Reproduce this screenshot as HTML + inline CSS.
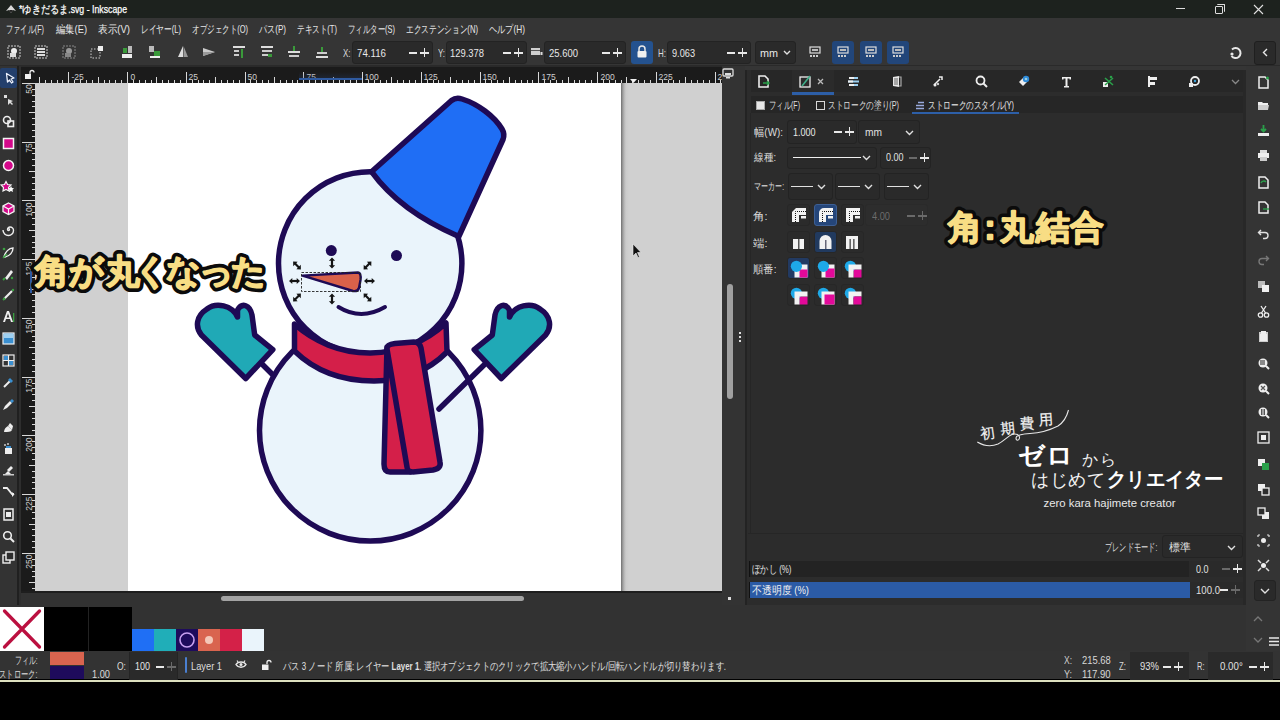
<!DOCTYPE html>
<html><head><meta charset="utf-8">
<style>
*{box-sizing:border-box;margin:0;padding:0}
html,body{width:1280px;height:720px;overflow:hidden;background:#000;font-family:"Liberation Sans",sans-serif;color:#e6e6e6;font-size:11px}
.a{position:absolute}
.t{position:absolute;white-space:nowrap;line-height:1}
.ent{position:absolute;background:#2a2a2a;border:1px solid #232323;border-radius:3px}
.btnb{position:absolute;background:#24528f;border-radius:3px}
svg{position:absolute;overflow:visible}
</style></head>
<body>
<div class="a" style="left:0;top:0;width:1280px;height:18px;background:#1d221e"></div><svg style="left:4px;top:2px" width="14" height="13" viewBox="0 0 14 13"><path d="M2 9 L7 3 L12 9 L9 8 L7 11 L5 8 Z" fill="#d8d8d8"/><path d="M5 8 L7 11 L9 8 Z" fill="#222"/></svg><div id="t1" class="t" style="left:19px;top:4px;font-size:10.5px;color:#ffffff;-webkit-text-stroke:0.25px #fff;transform:scaleX(0.8327);transform-origin:0 0;">*ゆきだるま.svg - Inkscape</div><div class="a" style="left:1176px;top:8px;width:9px;height:1px;background:#ddd"></div><div class="a" style="left:1215px;top:6px;width:8px;height:8px;border:1px solid #ddd;border-radius:1px"></div><div class="a" style="left:1217px;top:4px;width:8px;height:8px;border-top:1px solid #ddd;border-right:1px solid #ddd;border-radius:1px"></div><svg style="left:1253px;top:4px" width="11" height="11"><path d="M1 1L10 10M10 1L1 10" stroke="#e0e0e0" stroke-width="1.1"/></svg><div class="a" style="left:0;top:18px;width:1280px;height:48px;background:#353535"></div><div id="t2" class="t" style="left:6px;top:24px;font-size:11px;color:#e8e8e8;transform:scaleX(0.6546);transform-origin:0 0;">ファイル(F)</div><div id="t3" class="t" style="left:56px;top:24px;font-size:11px;color:#e8e8e8;transform:scaleX(0.8453);transform-origin:0 0;">編集(E)</div><div id="t4" class="t" style="left:98px;top:24px;font-size:11px;color:#e8e8e8;transform:scaleX(0.8726);transform-origin:0 0;">表示(V)</div><div id="t5" class="t" style="left:141px;top:24px;font-size:11px;color:#e8e8e8;transform:scaleX(0.6962);transform-origin:0 0;">レイヤー(L)</div><div id="t6" class="t" style="left:192px;top:24px;font-size:11px;color:#e8e8e8;transform:scaleX(0.6838);transform-origin:0 0;">オブジェクト(O)</div><div id="t7" class="t" style="left:259px;top:24px;font-size:11px;color:#e8e8e8;transform:scaleX(0.7363);transform-origin:0 0;">パス(P)</div><div id="t8" class="t" style="left:297px;top:24px;font-size:11px;color:#e8e8e8;transform:scaleX(0.6891);transform-origin:0 0;">テキスト(T)</div><div id="t9" class="t" style="left:348px;top:24px;font-size:11px;color:#e8e8e8;transform:scaleX(0.6746);transform-origin:0 0;">フィルター(S)</div><div id="t10" class="t" style="left:406px;top:24px;font-size:11px;color:#e8e8e8;transform:scaleX(0.6971);transform-origin:0 0;">エクステンション(N)</div><div id="t11" class="t" style="left:489px;top:24px;font-size:11px;color:#e8e8e8;transform:scaleX(0.7456);transform-origin:0 0;">ヘルプ(H)</div><svg style="left:7px;top:45px" width="14" height="14" viewBox="0 0 14 14"><rect x="1" y="1" width="12" height="12" fill="none" stroke="#cfcfcf" stroke-width="1" stroke-dasharray="2 1"/><circle cx="7" cy="6" r="3" fill="#eee"/><rect x="3" y="8" width="6" height="4" fill="#ddd"/></svg><svg style="left:34px;top:45px" width="14" height="14" viewBox="0 0 14 14"><rect x="1" y="1" width="12" height="12" fill="none" stroke="#cfcfcf" stroke-width="1" stroke-dasharray="2 1"/><rect x="3" y="3" width="8" height="2" fill="#ddd"/><rect x="3" y="6" width="8" height="2" fill="#ddd"/><rect x="3" y="9" width="8" height="2" fill="#ddd"/></svg><svg style="left:62px;top:45px" width="14" height="14" viewBox="0 0 14 14"><rect x="1" y="1" width="12" height="12" fill="none" stroke="#888" stroke-width="1" stroke-dasharray="2 1"/><circle cx="7" cy="6" r="3" fill="#999"/><rect x="3" y="8" width="6" height="4" fill="#888"/></svg><svg style="left:90px;top:45px" width="14" height="14" viewBox="0 0 14 14"><rect x="1" y="4" width="9" height="9" fill="none" stroke="#cfcfcf" stroke-width="1" stroke-dasharray="1.5 1.5"/><rect x="8" y="1" width="5" height="5" fill="#eee"/></svg><svg style="left:120px;top:45px" width="14" height="14" viewBox="0 0 14 14"><rect x="2" y="9" width="10" height="4" fill="#eee"/><rect x="3" y="3" width="4" height="5" fill="#3a9a3a"/><rect x="8" y="1" width="4" height="7" fill="#bbb"/></svg><svg style="left:148px;top:45px" width="14" height="14" viewBox="0 0 14 14"><rect x="1" y="1" width="5" height="6" fill="#bbb"/><rect x="6" y="6" width="6" height="6" fill="#3a9a3a"/><rect x="2" y="11" width="10" height="2" fill="#eee"/></svg><svg style="left:176px;top:45px" width="14" height="14" viewBox="0 0 14 14"><path d="M7 1L2 12H7Z" fill="#ddd"/><path d="M7.5 1L12 12H7.5Z" fill="#999"/></svg><svg style="left:202px;top:45px" width="14" height="14" viewBox="0 0 14 14"><path d="M1 3L13 7L1 11Z" fill="#ccc"/><path d="M1 7L13 7L1 11Z" fill="#999"/></svg><svg style="left:232px;top:45px" width="14" height="14" viewBox="0 0 14 14"><rect x="1" y="1" width="12" height="2" fill="#ddd"/><rect x="2" y="5" width="5" height="2" fill="#ccc"/><rect x="2" y="9" width="5" height="2" fill="#ccc"/><rect x="9" y="4" width="2" height="9" fill="#3a9a3a"/></svg><svg style="left:260px;top:45px" width="14" height="14" viewBox="0 0 14 14"><rect x="1" y="1" width="12" height="2" fill="#ddd"/><rect x="2" y="5" width="10" height="2" fill="#ccc"/><rect x="2" y="9" width="6" height="2" fill="#ccc"/><rect x="8" y="9" width="4" height="3" fill="#3a9a3a"/></svg><svg style="left:287px;top:45px" width="14" height="14" viewBox="0 0 14 14"><rect x="1" y="6" width="12" height="2" fill="#ddd"/><rect x="6" y="1" width="2" height="5" fill="#3a9a3a"/><rect x="2" y="10" width="10" height="2" fill="#ccc"/></svg><svg style="left:315px;top:45px" width="14" height="14" viewBox="0 0 14 14"><rect x="1" y="11" width="12" height="2" fill="#ddd"/><rect x="6" y="2" width="2" height="7" fill="#3a9a3a"/><rect x="2" y="7" width="10" height="2" fill="#ccc"/></svg><div id="t12" class="t" style="left:343px;top:48px;font-size:11px;color:#dcdcdc;transform:scaleX(0.7207);transform-origin:0 0;">X:</div><div class="ent" style="left:352px;top:41px;width:81px;height:23px"></div><div id="t13" class="t" style="left:357px;top:48px;font-size:11px;color:#e8e8e8;transform:scaleX(0.8834);transform-origin:0 0;">74.116</div><div class="a" style="left:409px;top:52px;width:8px;height:1.6px;background:#e8e8e8"></div><div class="a" style="left:420px;top:52px;width:9px;height:1.6px;background:#e8e8e8"></div><div class="a" style="left:423.7px;top:48.3px;width:1.6px;height:9px;background:#e8e8e8"></div><div id="t14" class="t" style="left:438px;top:48px;font-size:11px;color:#dcdcdc;transform:scaleX(0.7145);transform-origin:0 0;">Y:</div><div class="ent" style="left:446px;top:41px;width:81px;height:23px"></div><div id="t15" class="t" style="left:450px;top:48px;font-size:11px;color:#e8e8e8;transform:scaleX(0.8550);transform-origin:0 0;">129.378</div><div class="a" style="left:503px;top:52px;width:8px;height:1.6px;background:#e8e8e8"></div><div class="a" style="left:514px;top:52px;width:9px;height:1.6px;background:#e8e8e8"></div><div class="a" style="left:517.7px;top:48.3px;width:1.6px;height:9px;background:#e8e8e8"></div><svg style="left:531px;top:47px" width="12" height="10"><rect x="0" y="1" width="9" height="7" fill="#cfcfcf"/><rect x="0" y="3" width="9" height="1" fill="#555"/><rect x="9.5" y="5" width="2" height="3" fill="#ddd"/></svg><div class="ent" style="left:544px;top:41px;width:82px;height:23px"></div><div id="t16" class="t" style="left:549px;top:48px;font-size:11px;color:#e8e8e8;transform:scaleX(0.8617);transform-origin:0 0;">25.600</div><div class="a" style="left:602px;top:52px;width:8px;height:1.6px;background:#e8e8e8"></div><div class="a" style="left:613px;top:52px;width:9px;height:1.6px;background:#e8e8e8"></div><div class="a" style="left:616.7px;top:48.3px;width:1.6px;height:9px;background:#e8e8e8"></div><div class="btnb" style="left:631px;top:41px;width:22px;height:23px"></div><svg style="left:636px;top:45px" width="12" height="13"><path d="M3 6V4a3 3 0 0 1 6 0v2" stroke="#e8e8e8" stroke-width="1.5" fill="none"/><rect x="1.5" y="6" width="9" height="6.5" rx="1" fill="#f0f0f0"/></svg><div id="t17" class="t" style="left:658px;top:48px;font-size:11px;color:#dcdcdc;transform:scaleX(0.7273);transform-origin:0 0;">H:</div><div class="ent" style="left:667px;top:41px;width:84px;height:23px"></div><div id="t18" class="t" style="left:672px;top:48px;font-size:11px;color:#e8e8e8;transform:scaleX(0.8354);transform-origin:0 0;">9.063</div><div class="a" style="left:727px;top:52px;width:8px;height:1.6px;background:#e8e8e8"></div><div class="a" style="left:738px;top:52px;width:9px;height:1.6px;background:#e8e8e8"></div><div class="a" style="left:741.7px;top:48.3px;width:1.6px;height:9px;background:#e8e8e8"></div><div class="ent" style="left:755px;top:41px;width:41px;height:23px"></div><div id="t19" class="t" style="left:760px;top:48px;font-size:11px;color:#e8e8e8;transform:scaleX(0.9821);transform-origin:0 0;">mm</div><svg style="left:783px;top:50px" width="8" height="5"><path d="M1 1L4 4L7 1" stroke="#e0e0e0" stroke-width="1.4" fill="none"/></svg><svg style="left:809px;top:46px" width="13" height="13" viewBox="0 0 13 13"><rect x="1" y="1" width="10" height="6" fill="none" stroke="#ddd" stroke-width="1.2"/><rect x="3" y="3" width="6" height="2" fill="#bbb"/><rect x="1" y="9" width="2" height="2" fill="#ccc"/><rect x="4" y="9" width="2" height="2" fill="#ccc"/><rect x="7" y="9" width="2" height="2" fill="#ccc"/></svg><div class="btnb" style="left:832px;top:41px;width:22px;height:23px;background:#22467a"></div><svg style="left:837px;top:46px" width="13" height="13" viewBox="0 0 13 13"><rect x="1" y="1" width="10" height="6" fill="none" stroke="#ddd" stroke-width="1.2"/><rect x="3" y="3" width="6" height="2" fill="#bbb"/><rect x="1" y="9" width="2" height="2" fill="#ccc"/><rect x="4" y="9" width="2" height="2" fill="#ccc"/><rect x="7" y="9" width="2" height="2" fill="#ccc"/></svg><div class="btnb" style="left:860px;top:41px;width:22px;height:23px;background:#22467a"></div><svg style="left:865px;top:46px" width="13" height="13" viewBox="0 0 13 13"><rect x="1" y="1" width="10" height="6" fill="none" stroke="#ddd" stroke-width="1.2"/><rect x="3" y="3" width="6" height="2" fill="#bbb"/><rect x="1" y="9" width="2" height="2" fill="#ccc"/><rect x="4" y="9" width="2" height="2" fill="#ccc"/><rect x="7" y="9" width="2" height="2" fill="#ccc"/></svg><div class="btnb" style="left:887px;top:41px;width:22px;height:23px;background:#22467a"></div><svg style="left:892px;top:46px" width="13" height="13" viewBox="0 0 13 13"><rect x="1" y="1" width="10" height="6" fill="none" stroke="#ddd" stroke-width="1.2"/><rect x="3" y="3" width="6" height="2" fill="#bbb"/><rect x="1" y="9" width="2" height="2" fill="#ccc"/><rect x="4" y="9" width="2" height="2" fill="#ccc"/><rect x="7" y="9" width="2" height="2" fill="#ccc"/></svg><svg style="left:1228px;top:46px" width="14" height="14" viewBox="0 0 14 14"><path d="M4 3.5A5 5 0 1 1 3.5 10" stroke="#e8e8e8" stroke-width="2" fill="none"/><circle cx="4" cy="8" r="1.6" fill="#e8e8e8"/></svg><div class="ent" style="left:1254px;top:41px;width:22px;height:24px;background:#2a2a2a;border-color:#1f1f1f"></div><svg style="left:1262px;top:48px" width="6" height="9"><path d="M5 1L1.5 4.5L5 8" stroke="#e8e8e8" stroke-width="1.4" fill="none"/></svg><div class="a" style="left:0;top:65px;width:1280px;height:2px;background:#2a2a2a"></div><div class="a" style="left:0;top:66px;width:17px;height:539px;background:#333333"></div><div class="a" style="left:17px;top:66px;width:1.5px;height:539px;background:#202020"></div><div class="a" style="left:18.5px;top:66px;width:2.5px;height:539px;background:#2e2e2e"></div><div class="a" style="left:0;top:68px;width:16.5px;height:20px;background:#233f6c;border-radius:2px"></div><svg style="left:2px;top:71px" width="13" height="13" viewBox="0 0 13 13"><path d="M4.5 2.5L12 7L9 8L11 11L9.5 12L7.5 9L5.5 11Z" fill="#15294a" stroke="#eef3ff" stroke-width="1.3" stroke-linejoin="round"/></svg><svg style="left:2px;top:93px" width="13" height="13" viewBox="0 0 13 13"><rect x="2" y="2" width="3" height="3" fill="#ddd"/><path d="M6 6L6 12L8 10L10 12L11 11L9 9L11 8Z" fill="#ddd"/></svg><svg style="left:2px;top:115px" width="13" height="13" viewBox="0 0 13 13"><circle cx="5" cy="5" r="3.5" fill="none" stroke="#eee" stroke-width="1.6"/><rect x="6" y="6" width="5.5" height="5.5" fill="none" stroke="#eee" stroke-width="1.6"/></svg><svg style="left:2px;top:137px" width="13" height="13" viewBox="0 0 13 13"><rect x="1.5" y="1.5" width="10" height="10" fill="#d4088a" stroke="#f4f4f4" stroke-width="1.5"/></svg><svg style="left:2px;top:159px" width="13" height="13" viewBox="0 0 13 13"><circle cx="6.5" cy="6.5" r="5" fill="#d4088a" stroke="#f4f4f4" stroke-width="1.5"/></svg><svg style="left:2px;top:180px" width="13" height="13" viewBox="0 0 13 13"><path d="M4 1.5L5.5 4.5L9 5L6.5 7.5L7 11L4 9.5L1 11L1.5 7.5L-1 5L2.5 4.5Z" fill="#d4088a" stroke="#f4f4f4" stroke-width="1.2"/><path d="M9 6L10 8L12 8.3L10.5 9.8L11 12L9 11L7 12L7.5 9.8L6 8.3L8 8Z" fill="#fff"/></svg><svg style="left:2px;top:202px" width="13" height="13" viewBox="0 0 13 13"><path d="M6.5 1L12 4V9.5L6.5 12.5L1 9.5V4Z" fill="#d4088a" stroke="#f4f4f4" stroke-width="1.3"/><path d="M1 4L6.5 7L12 4M6.5 7V12.5" stroke="#f4f4f4" stroke-width="1.2" fill="none"/></svg><svg style="left:2px;top:223px" width="13" height="13" viewBox="0 0 13 13"><path d="M6.5 6.5m0-1a1 1 0 1 1 -1 1a2.5 2.5 0 0 1 2.5-2.5a3.5 3.5 0 0 1 3.5 3.5a5 5 0 0 1-5 5a5.5 5.5 0 0 1-5.5-5.5" fill="none" stroke="#eee" stroke-width="1.4"/></svg><svg style="left:2px;top:246px" width="13" height="13" viewBox="0 0 13 13"><path d="M2 11C3 6 7 2 11 2C11 6 8 10 3 11Z" fill="none" stroke="#eee" stroke-width="1.4"/><path d="M1 12L5 8" stroke="#3aa040" stroke-width="1.6"/><circle cx="2" cy="3" r="1.3" fill="#3aa040"/></svg><svg style="left:2px;top:268px" width="13" height="13" viewBox="0 0 13 13"><path d="M3 10L9 2L11 4L5 12Z" fill="#eee"/><path d="M1 12L3 10" stroke="#3aa040" stroke-width="2"/><circle cx="10" cy="10" r="1.2" fill="#3aa040"/></svg><svg style="left:2px;top:288px" width="13" height="13" viewBox="0 0 13 13"><path d="M2 11L10 3" stroke="#eee" stroke-width="2.2"/><path d="M1 12L3 10" stroke="#3aa040" stroke-width="2"/><circle cx="11" cy="2" r="1.2" fill="#3aa040"/></svg><svg style="left:2px;top:310px" width="13" height="13" viewBox="0 0 13 13"><path d="M1 12L5 1H7L11 12H9L8 9H4L3 12Z M4.6 7.5H7.4L6 3.5Z" fill="#f0f0f0"/><rect x="11" y="3" width="1.3" height="9" fill="#3aa040"/></svg><svg style="left:2px;top:332px" width="13" height="13" viewBox="0 0 13 13"><rect x="1" y="1" width="11" height="11" fill="#3a8fd0" stroke="#eee" stroke-width="1.2"/><rect x="2" y="2" width="9" height="4" fill="#9fd0f0"/></svg><svg style="left:2px;top:354px" width="13" height="13" viewBox="0 0 13 13"><rect x="1" y="1" width="11" height="11" fill="none" stroke="#eee" stroke-width="1.2"/><path d="M1 6.5H12M6.5 1V12" stroke="#eee" stroke-width="1.2"/><rect x="2" y="2" width="4" height="4" fill="#3a8fd0"/><rect x="7" y="7" width="4" height="4" fill="#3a8fd0"/></svg><svg style="left:2px;top:376px" width="13" height="13" viewBox="0 0 13 13"><path d="M2 11L8 5" stroke="#eee" stroke-width="2"/><path d="M8 2L11 5L9 7L6 4Z" fill="#3a8fd0"/></svg><svg style="left:2px;top:398px" width="13" height="13" viewBox="0 0 13 13"><path d="M1 12L3 8L8 3L10 5L5 10Z" fill="#eee"/><path d="M8 3L10 1L12 3L10 5Z" fill="#3a8fd0"/></svg><svg style="left:2px;top:421px" width="13" height="13" viewBox="0 0 13 13"><path d="M2 11C2 8 4 6 6 5L10 9C9 11 6 11 2 11Z" fill="#eee"/><path d="M6 5L8 2L11 5L10 9Z" fill="#eee"/></svg><svg style="left:2px;top:442px" width="13" height="13" viewBox="0 0 13 13"><circle cx="3" cy="3" r="1" fill="#ccc"/><circle cx="6" cy="2" r="1" fill="#ccc"/><path d="M3 6H10V12H3Z" fill="#eee"/><rect x="4" y="4" width="5" height="2" fill="#3a8fd0"/></svg><svg style="left:2px;top:463px" width="13" height="13" viewBox="0 0 13 13"><path d="M2 12L6 8L10 12Z" fill="#eee"/><path d="M5 7L9 3L11 5L7 9Z" fill="#eee"/><rect x="1" y="11" width="11" height="1.5" fill="#ccc"/></svg><svg style="left:2px;top:485px" width="13" height="13" viewBox="0 0 13 13"><path d="M1 3H5L10 9H12" stroke="#eee" stroke-width="1.8" fill="none"/><path d="M10 7L12.5 9.5L10 12Z" fill="#eee"/></svg><svg style="left:2px;top:508px" width="13" height="13" viewBox="0 0 13 13"><rect x="2" y="1" width="9" height="11" fill="none" stroke="#eee" stroke-width="1.5"/><rect x="4" y="4" width="5" height="5" fill="#eee"/></svg><svg style="left:2px;top:530px" width="13" height="13" viewBox="0 0 13 13"><circle cx="5.5" cy="5.5" r="3.8" fill="none" stroke="#eee" stroke-width="1.6"/><path d="M8.5 8.5L12 12" stroke="#eee" stroke-width="2"/></svg><svg style="left:2px;top:551px" width="13" height="13" viewBox="0 0 13 13"><rect x="1" y="4" width="7" height="8" fill="none" stroke="#eee" stroke-width="1.4"/><rect x="4" y="1" width="8" height="8" fill="#2e2e2e" stroke="#eee" stroke-width="1.4"/></svg><div class="a" style="left:21px;top:67px;width:701px;height:16px;background:#1b1b1b"></div><div class="a" style="left:21px;top:83px;width:14px;height:509px;background:#1b1b1b"></div><svg style="left:24px;top:70px" width="10" height="10"><path d="M6 4V2.5a2 2 0 0 1 4 0" stroke="#eee" stroke-width="1.3" fill="none"/><rect x="1" y="4" width="6" height="5" fill="#f0f0f0"/></svg><svg style="left:0;top:0" width="1280" height="720"><path d="M39.38 77V83 M45.25 80V83 M51.12 80V83 M57.00 80V83 M62.88 80V83 M68.75 72V83 M74.62 80V83 M80.50 80V83 M86.38 80V83 M92.25 80V83 M98.12 77V83 M104.00 80V83 M109.88 80V83 M115.75 80V83 M121.62 80V83 M127.50 72V83 M133.38 80V83 M139.25 80V83 M145.12 80V83 M151.00 80V83 M156.88 77V83 M162.75 80V83 M168.62 80V83 M174.50 80V83 M180.38 80V83 M186.25 72V83 M192.12 80V83 M198.00 80V83 M203.88 80V83 M209.75 80V83 M215.62 77V83 M221.50 80V83 M227.38 80V83 M233.25 80V83 M239.12 80V83 M245.00 72V83 M250.88 80V83 M256.75 80V83 M262.62 80V83 M268.50 80V83 M274.38 77V83 M280.25 80V83 M286.12 80V83 M292.00 80V83 M297.88 80V83 M303.75 72V83 M309.62 80V83 M315.50 80V83 M321.38 80V83 M327.25 80V83 M333.12 77V83 M339.00 80V83 M344.88 80V83 M350.75 80V83 M356.62 80V83 M362.50 72V83 M368.38 80V83 M374.25 80V83 M380.12 80V83 M386.00 80V83 M391.88 77V83 M397.75 80V83 M403.62 80V83 M409.50 80V83 M415.38 80V83 M421.25 72V83 M427.12 80V83 M433.00 80V83 M438.88 80V83 M444.75 80V83 M450.62 77V83 M456.50 80V83 M462.38 80V83 M468.25 80V83 M474.12 80V83 M480.00 72V83 M485.88 80V83 M491.75 80V83 M497.62 80V83 M503.50 80V83 M509.38 77V83 M515.25 80V83 M521.12 80V83 M527.00 80V83 M532.88 80V83 M538.75 72V83 M544.62 80V83 M550.50 80V83 M556.38 80V83 M562.25 80V83 M568.12 77V83 M574.00 80V83 M579.88 80V83 M585.75 80V83 M591.62 80V83 M597.50 72V83 M603.38 80V83 M609.25 80V83 M615.12 80V83 M621.00 80V83 M626.88 77V83 M632.75 80V83 M638.62 80V83 M644.50 80V83 M650.38 80V83 M656.25 72V83 M662.12 80V83 M668.00 80V83 M673.88 80V83 M679.75 80V83 M685.62 77V83 M691.50 80V83 M697.38 80V83 M703.25 80V83 M709.12 80V83 M715.00 72V83 M720.88 80V83" stroke="#d8d8d8" stroke-width="1" fill="none" shape-rendering="crispEdges"/></svg><div id="t20" class="t" style="left:71.5px;top:72.5px;font-size:8.5px;color:#cfcfcf;">-25</div><div id="t21" class="t" style="left:130.5px;top:72.5px;font-size:8.5px;color:#cfcfcf;">0</div><div id="t22" class="t" style="left:188.5px;top:72.5px;font-size:8.5px;color:#cfcfcf;">25</div><div id="t23" class="t" style="left:247.5px;top:72.5px;font-size:8.5px;color:#cfcfcf;">50</div><div id="t24" class="t" style="left:306.5px;top:72.5px;font-size:8.5px;color:#cfcfcf;">75</div><div id="t25" class="t" style="left:364.5px;top:72.5px;font-size:8.5px;color:#cfcfcf;">100</div><div id="t26" class="t" style="left:423.5px;top:72.5px;font-size:8.5px;color:#cfcfcf;">125</div><div id="t27" class="t" style="left:482.5px;top:72.5px;font-size:8.5px;color:#cfcfcf;">150</div><div id="t28" class="t" style="left:541.5px;top:72.5px;font-size:8.5px;color:#cfcfcf;">175</div><div id="t29" class="t" style="left:600.5px;top:72.5px;font-size:8.5px;color:#cfcfcf;">200</div><div id="t30" class="t" style="left:658.5px;top:72.5px;font-size:8.5px;color:#cfcfcf;">225</div><div id="t31" class="t" style="left:717.5px;top:72.5px;font-size:8.5px;color:#cfcfcf;">2</div><svg style="left:630px;top:79px" width="8" height="5"><path d="M0 0H7L3.5 4Z" fill="#f0f0f0"/></svg><div class="a" style="left:299px;top:72px;width:63px;height:7px;background:linear-gradient(180deg,rgba(40,60,90,0) 0,rgba(40,60,100,0.35) 100%)"></div><div class="a" style="left:299px;top:78px;width:63px;height:2px;background:#2f5aa0"></div><svg style="left:0;top:0" width="1280" height="720"><path d="M22 83.40H35 M32 89.28H35 M32 95.15H35 M32 101.03H35 M32 106.90H35 M29 112.78H35 M32 118.65H35 M32 124.53H35 M32 130.40H35 M32 136.28H35 M22 142.15H35 M32 148.03H35 M32 153.90H35 M32 159.78H35 M32 165.65H35 M29 171.53H35 M32 177.40H35 M32 183.28H35 M32 189.15H35 M32 195.03H35 M22 200.90H35 M32 206.78H35 M32 212.65H35 M32 218.53H35 M32 224.40H35 M29 230.28H35 M32 236.15H35 M32 242.03H35 M32 247.90H35 M32 253.78H35 M22 259.65H35 M32 265.52H35 M32 271.40H35 M32 277.27H35 M32 283.15H35 M29 289.02H35 M32 294.90H35 M32 300.77H35 M32 306.65H35 M32 312.52H35 M22 318.40H35 M32 324.27H35 M32 330.15H35 M32 336.02H35 M32 341.90H35 M29 347.77H35 M32 353.65H35 M32 359.52H35 M32 365.40H35 M32 371.27H35 M22 377.15H35 M32 383.02H35 M32 388.90H35 M32 394.77H35 M32 400.65H35 M29 406.52H35 M32 412.40H35 M32 418.27H35 M32 424.15H35 M32 430.02H35 M22 435.90H35 M32 441.77H35 M32 447.65H35 M32 453.52H35 M32 459.40H35 M29 465.27H35 M32 471.15H35 M32 477.02H35 M32 482.90H35 M32 488.77H35 M22 494.65H35 M32 500.52H35 M32 506.40H35 M32 512.27H35 M32 518.15H35 M29 524.02H35 M32 529.90H35 M32 535.77H35 M32 541.65H35 M32 547.52H35 M22 553.40H35 M32 559.27H35 M32 565.15H35 M32 571.02H35 M32 576.90H35 M29 582.77H35 M32 588.65H35" stroke="#d8d8d8" stroke-width="1" fill="none" shape-rendering="crispEdges"/></svg><div class="t" style="left:24.5px;top:84.4px;font-size:8.5px;color:#cfcfcf;transform-origin:0 0;transform:translate(0px,9.8px) rotate(-90deg)">50</div><div class="t" style="left:24.5px;top:143.2px;font-size:8.5px;color:#cfcfcf;transform-origin:0 0;transform:translate(0px,9.8px) rotate(-90deg)">75</div><div class="t" style="left:24.5px;top:201.9px;font-size:8.5px;color:#cfcfcf;transform-origin:0 0;transform:translate(0px,14.7px) rotate(-90deg)">100</div><div class="t" style="left:24.5px;top:260.6px;font-size:8.5px;color:#cfcfcf;transform-origin:0 0;transform:translate(0px,14.7px) rotate(-90deg)">125</div><div class="t" style="left:24.5px;top:319.4px;font-size:8.5px;color:#cfcfcf;transform-origin:0 0;transform:translate(0px,14.7px) rotate(-90deg)">150</div><div class="t" style="left:24.5px;top:378.1px;font-size:8.5px;color:#cfcfcf;transform-origin:0 0;transform:translate(0px,14.7px) rotate(-90deg)">175</div><div class="t" style="left:24.5px;top:436.9px;font-size:8.5px;color:#cfcfcf;transform-origin:0 0;transform:translate(0px,14.7px) rotate(-90deg)">200</div><div class="t" style="left:24.5px;top:495.6px;font-size:8.5px;color:#cfcfcf;transform-origin:0 0;transform:translate(0px,14.7px) rotate(-90deg)">225</div><div class="t" style="left:24.5px;top:554.4px;font-size:8.5px;color:#cfcfcf;transform-origin:0 0;transform:translate(0px,14.7px) rotate(-90deg)">250</div><div class="a" style="left:29.5px;top:270px;width:2px;height:23px;background:#2f5aa0"></div><div class="a" style="left:35px;top:83px;width:687px;height:509px;background:#d0d0d0"></div><div class="a" style="left:128px;top:83px;width:493px;height:509px;background:#ffffff"></div><div class="a" style="left:621px;top:83px;width:8px;height:509px;background:linear-gradient(90deg,#6e6e6e 0,#8a8a8a 1px,#b4b4b4 3px,#cbcbcb 5px,#d0d0d0 8px)"></div><svg style="left:0;top:0" width="1280" height="720" viewBox="0 0 1280 720"><g stroke-linejoin="round" stroke-linecap="round"><g transform="translate(747,0) scale(-1,1)"><path d="M484 365L460 389" stroke="#1e0a55" stroke-width="5.5"/><path d="M474.2 349.6L492.3 335L495 315C497 305 505 302 509.5 310L509.5 317C515 305 531 302 540 309C551 316 552 327 545.6 335L501.3 378.5Z" fill="#20a9b6" stroke="#1e0a55" stroke-width="5.5"/></g><circle cx="370.2" cy="430.4" r="110.7" fill="#eaf4fb" stroke="#1e0a55" stroke-width="5.5"/><path d="M484 365L439 409" stroke="#1e0a55" stroke-width="5.5"/><path d="M474.2 349.6L492.3 335L495 315C497 305 505 302 509.5 310L509.5 317C515 305 531 302 540 309C551 316 552 327 545.6 335L501.3 378.5Z" fill="#20a9b6" stroke="#1e0a55" stroke-width="5.5"/><circle cx="370.2" cy="263.4" r="91.7" fill="#eaf4fb" stroke="#1e0a55" stroke-width="5.5"/><path d="M294.5 324A112 112 0 0 0 446 323L447 352C425 374 400 381 374 381C345 381 318 374 294.5 351Z" fill="#d41f49" stroke="#1e0a55" stroke-width="5.5"/><path d="M387 347L406 345L410 472L390 472C385 472 384 468 384 464Z" fill="#d41f49" stroke="#1e0a55" stroke-width="5.5"/><path d="M387 349C387 345 390 344 395 343.5L414 342C418 342 420 344 421 348L440 462C441 467 438 469 433 470L413 472C409 472 407 470 407 467Z" fill="#d41f49" stroke="#1e0a55" stroke-width="5.5"/><path d="M371.5 171.7L451.5 100.5Q456 97 462 99C478 104 494 116 502 129Q505 134 503 139.5L458.8 236.5C425 222 392 200 371.5 171.7Z" fill="#1f6ef5" stroke="#1e0a55" stroke-width="5.5"/><circle cx="331.3" cy="250.6" r="5.5" fill="#1e0a55" stroke="none"/><circle cx="396.5" cy="255.6" r="5.5" fill="#1e0a55" stroke="none"/><path d="M338.5 307Q361 321 385 307" fill="none" stroke="#1e0a55" stroke-width="4"/><path d="M302.5 275.6L358 272.5C361 273 361 276 360.5 280L359 288C358 291 356 291.5 353 291Z" fill="#d9614a" stroke="#1e0a55" stroke-width="2.4"/></g><rect x="301.5" y="272.5" width="59" height="19" fill="none" stroke="#222" stroke-width="0.9" stroke-dasharray="2.5 1.5"/><g transform="translate(332,263) rotate(90)"><path d="M-3.5 0H3.5" stroke="#141414" stroke-width="2.2"/><path d="M-5.5 0L-2.2 -3.1V3.1Z M5.5 0L2.2 -3.1V3.1Z" fill="#141414"/></g><g transform="translate(332,299) rotate(90)"><path d="M-3.5 0H3.5" stroke="#141414" stroke-width="2.2"/><path d="M-5.5 0L-2.2 -3.1V3.1Z M5.5 0L2.2 -3.1V3.1Z" fill="#141414"/></g><g transform="translate(294.5,281) rotate(0)"><path d="M-3.5 0H3.5" stroke="#141414" stroke-width="2.2"/><path d="M-5.5 0L-2.2 -3.1V3.1Z M5.5 0L2.2 -3.1V3.1Z" fill="#141414"/></g><g transform="translate(369.5,281) rotate(0)"><path d="M-3.5 0H3.5" stroke="#141414" stroke-width="2.2"/><path d="M-5.5 0L-2.2 -3.1V3.1Z M5.5 0L2.2 -3.1V3.1Z" fill="#141414"/></g><g transform="translate(297,265.5) rotate(45)"><path d="M-3.5 0H3.5" stroke="#141414" stroke-width="2.2"/><path d="M-5.5 0L-2.2 -3.1V3.1Z M5.5 0L2.2 -3.1V3.1Z" fill="#141414"/></g><g transform="translate(367.5,265.5) rotate(-45)"><path d="M-3.5 0H3.5" stroke="#141414" stroke-width="2.2"/><path d="M-5.5 0L-2.2 -3.1V3.1Z M5.5 0L2.2 -3.1V3.1Z" fill="#141414"/></g><g transform="translate(297,297.5) rotate(-45)"><path d="M-3.5 0H3.5" stroke="#141414" stroke-width="2.2"/><path d="M-5.5 0L-2.2 -3.1V3.1Z M5.5 0L2.2 -3.1V3.1Z" fill="#141414"/></g><g transform="translate(367.5,297.5) rotate(45)"><path d="M-3.5 0H3.5" stroke="#141414" stroke-width="2.2"/><path d="M-5.5 0L-2.2 -3.1V3.1Z M5.5 0L2.2 -3.1V3.1Z" fill="#141414"/></g><path d="M633 244V256L636 253L638 257.5L639.5 257L637.5 252.5H641Z" fill="#111" stroke="#eee" stroke-width="0.6"/></svg><div class="a" style="left:722px;top:66px;width:23px;height:539px;background:#333333"></div><svg style="left:722px;top:68px" width="12" height="11"><rect x="1" y="1" width="10" height="7" rx="1" fill="none" stroke="#ddd" stroke-width="1.3"/><rect x="3" y="5" width="6" height="2" fill="#ddd"/><rect x="4" y="9" width="4" height="1.5" fill="#ddd"/></svg><div class="a" style="left:727px;top:284px;width:6px;height:115px;background:#a0a0a0;border-radius:3px"></div><div class="a" style="left:739px;top:332px;width:2px;height:2px;background:#ddd"></div><div class="a" style="left:739px;top:336px;width:2px;height:2px;background:#ddd"></div><div class="a" style="left:739px;top:340px;width:2px;height:2px;background:#ddd"></div><div class="a" style="left:21px;top:591px;width:701px;height:14px;background:#323232"></div><div class="a" style="left:21px;top:591px;width:701px;height:1.5px;background:#1e1e1e"></div><div class="a" style="left:221px;top:595.8px;width:303px;height:5.5px;background:#a3a3a3;border-radius:3px"></div><div class="a" style="left:728px;top:597px;width:3px;height:3px;background:#ddd"></div><div class="a" style="left:745px;top:70px;width:501px;height:535px;background:#2c2c2c"></div><div class="a" style="left:745px;top:66px;width:535px;height:4px;background:#353535"></div><div class="a" style="left:745px;top:70px;width:2px;height:535px;background:#232323"></div><div class="a" style="left:751px;top:70px;width:492px;height:22px;background:#272727"></div><div class="a" style="left:792px;top:70px;width:42px;height:22px;background:#2b2b2b"></div><div class="a" style="left:792px;top:92px;width:42px;height:3px;background:#2d5fa8"></div><svg style="left:757px;top:75px" width="13" height="13" viewBox="0 0 13 13"><path d="M2 1H8L11 4V12H2Z" fill="none" stroke="#eee" stroke-width="1.6"/><path d="M6 8H12M10 6L12 8L10 10" stroke="#2aa04a" stroke-width="1.4" fill="none"/></svg><svg style="left:799px;top:75px" width="13" height="13" viewBox="0 0 13 13"><rect x="1" y="2" width="10" height="10" fill="none" stroke="#eee" stroke-width="1.3"/><path d="M3 11L11 1" stroke="#3fae8a" stroke-width="1.6"/></svg><svg style="left:847px;top:75px" width="13" height="13" viewBox="0 0 13 13"><path d="M2 3H11M1 6.5H12M2 10H11" stroke="#9cd0f0" stroke-width="2.2"/><path d="M2 3H7M1 6.5H6M2 10H7" stroke="#eee" stroke-width="2.2"/></svg><svg style="left:890px;top:75px" width="13" height="13" viewBox="0 0 13 13"><path d="M3 2L9 1V12L3 11Z" fill="#e8e8e8"/><path d="M5 3V10M7 3V10" stroke="#444" stroke-width="0.8"/><path d="M9 2H11V11H9" fill="none" stroke="#aaa" stroke-width="1.2"/></svg><svg style="left:932px;top:75px" width="13" height="13" viewBox="0 0 13 13"><path d="M2 10L8 4M7 2H10V5" stroke="#eee" stroke-width="1.5" fill="none"/><circle cx="3" cy="10" r="1.5" fill="#eee"/><circle cx="6" cy="9" r="1.2" fill="#ccc"/></svg><svg style="left:975px;top:75px" width="13" height="13" viewBox="0 0 13 13"><circle cx="5.5" cy="5.5" r="4" fill="none" stroke="#eee" stroke-width="1.8"/><path d="M8.5 8.5L12 12" stroke="#eee" stroke-width="2"/></svg><svg style="left:1017px;top:75px" width="13" height="13" viewBox="0 0 13 13"><path d="M2 7L6 3L10 7L6 11Z" fill="#eee"/><circle cx="9" cy="4" r="3.2" fill="#2e8ad8"/><circle cx="9" cy="4" r="1.3" fill="#9cd"/></svg><svg style="left:1060px;top:75px" width="13" height="13" viewBox="0 0 13 13"><path d="M2 2H11V4.5H9.5V3.5H7.5V11H9V12.5H4V11H5.5V3.5H3.5V4.5H2Z" fill="#eee"/></svg><svg style="left:1102px;top:75px" width="13" height="13" viewBox="0 0 13 13"><rect x="1" y="7" width="5" height="5" fill="#eee"/><path d="M3 3L11 10M11 3L3 10" stroke="#2aa04a" stroke-width="1.6"/><circle cx="9" cy="2" r="1.3" fill="#2aa04a"/></svg><svg style="left:1146px;top:75px" width="13" height="13" viewBox="0 0 13 13"><rect x="2" y="1" width="2" height="11" fill="#eee"/><rect x="4" y="2" width="7" height="3" fill="#eee"/><rect x="4" y="7" width="5" height="3" fill="#eee"/></svg><svg style="left:1188px;top:75px" width="13" height="13" viewBox="0 0 13 13"><circle cx="7" cy="6" r="4" fill="none" stroke="#eee" stroke-width="1.8"/><rect x="1" y="8" width="4" height="4" fill="#eee"/><circle cx="7" cy="6" r="1.2" fill="#3aa0d8"/></svg><svg style="left:817px;top:78px" width="7" height="7"><path d="M1 1L6 6M6 1L1 6" stroke="#bbb" stroke-width="1.3"/></svg><svg style="left:1231px;top:79px" width="9" height="6"><path d="M1 1L4.5 4.5L8 1" stroke="#888" stroke-width="1.3" fill="none"/></svg><div class="a" style="left:751px;top:95.5px;width:492px;height:17px;background:#262626"></div><div class="a" style="left:756px;top:101px;width:9px;height:9px;background:#e8e8e8;border:1px solid #aaa"></div><div id="t32" class="t" style="left:769px;top:100px;font-size:10.5px;color:#dedede;transform:scaleX(0.6678);transform-origin:0 0;">フィル(F)</div><div class="a" style="left:816px;top:101px;width:9px;height:9px;border:1.5px solid #d8d8d8"></div><div id="t33" class="t" style="left:828px;top:100px;font-size:10.5px;color:#dedede;transform:scaleX(0.6961);transform-origin:0 0;">ストロークの塗り(P)</div><svg style="left:915px;top:101px" width="10" height="9"><path d="M3 1.5H9M1 4.5H9M1 7.5H9" stroke="#9ad" stroke-width="1.3"/></svg><div id="t34" class="t" style="left:928px;top:100px;font-size:10.5px;color:#e8e8e8;transform:scaleX(0.6935);transform-origin:0 0;">ストロークのスタイル(Y)</div><div class="a" style="left:912px;top:112px;width:107px;height:2px;background:#2d5fa8"></div><div class="a" style="left:750px;top:113px;width:1px;height:421px;background:#262626"></div><div class="a" style="left:748px;top:533px;width:495px;height:1px;background:#262626"></div><div id="t35" class="t" style="left:754px;top:127px;font-size:10.5px;color:#dcdcdc;transform:scaleX(0.9407);transform-origin:0 0;">幅(W):</div><div class="ent" style="left:787px;top:120px;width:70px;height:24px"></div><div id="t36" class="t" style="left:793px;top:127px;font-size:11px;color:#e8e8e8;transform:scaleX(0.8209);transform-origin:0 0;">1.000</div><div class="a" style="left:834px;top:131px;width:8px;height:1.6px;background:#e8e8e8"></div><div class="a" style="left:845px;top:131px;width:9px;height:1.6px;background:#e8e8e8"></div><div class="a" style="left:848.7px;top:127.3px;width:1.6px;height:9px;background:#e8e8e8"></div><div class="ent" style="left:858px;top:120px;width:62px;height:24px"></div><div id="t37" class="t" style="left:865px;top:127px;font-size:11px;color:#e0e0e0;transform:scaleX(0.9275);transform-origin:0 0;">mm</div><svg style="left:905px;top:130px" width="9" height="6"><path d="M1 1L4.5 4.5L8 1" stroke="#e0e0e0" stroke-width="1.4" fill="none"/></svg><div id="t38" class="t" style="left:754px;top:152px;font-size:10.5px;color:#dcdcdc;transform:scaleX(0.8828);transform-origin:0 0;">線種:</div><div class="ent" style="left:787px;top:147px;width:90px;height:22px"></div><div class="a" style="left:793px;top:156.5px;width:68px;height:1.6px;background:#f0f0f0"></div><svg style="left:862px;top:155px" width="9" height="6"><path d="M1 1L4.5 4.5L8 1" stroke="#e0e0e0" stroke-width="1.4" fill="none"/></svg><div class="ent" style="left:880px;top:147px;width:51px;height:22px"></div><div id="t39" class="t" style="left:886px;top:152px;font-size:11px;color:#e0e0e0;transform:scaleX(0.8169);transform-origin:0 0;">0.00</div><div class="a" style="left:909px;top:157px;width:8px;height:1.6px;background:#6a6a6a"></div><div class="a" style="left:920px;top:157px;width:9px;height:1.6px;background:#e8e8e8"></div><div class="a" style="left:923.7px;top:153.3px;width:1.6px;height:9px;background:#e8e8e8"></div><div id="t40" class="t" style="left:754px;top:181px;font-size:10.5px;color:#dcdcdc;transform:scaleX(0.6394);transform-origin:0 0;">マーカー:</div><div class="ent" style="left:788px;top:173px;width:45px;height:27px"></div><div class="a" style="left:791px;top:186px;width:22px;height:1px;background:#e0e0e0"></div><svg style="left:817px;top:184px" width="9" height="6"><path d="M1 1L4.5 4.5L8 1" stroke="#e0e0e0" stroke-width="1.4" fill="none"/></svg><div class="ent" style="left:835px;top:173px;width:45px;height:27px"></div><div class="a" style="left:838px;top:186px;width:22px;height:1px;background:#e0e0e0"></div><svg style="left:864px;top:184px" width="9" height="6"><path d="M1 1L4.5 4.5L8 1" stroke="#e0e0e0" stroke-width="1.4" fill="none"/></svg><div class="ent" style="left:884px;top:173px;width:45px;height:27px"></div><div class="a" style="left:887px;top:186px;width:22px;height:1px;background:#e0e0e0"></div><svg style="left:913px;top:184px" width="9" height="6"><path d="M1 1L4.5 4.5L8 1" stroke="#e0e0e0" stroke-width="1.4" fill="none"/></svg><div id="t41" class="t" style="left:753px;top:211px;font-size:10.5px;color:#dcdcdc;transform:scaleX(1.0415);transform-origin:0 0;">角:</div><div class="a" style="left:787px;top:204px;width:23px;height:22px;background:#2b2b2b;border:1px solid #272727;border-radius:3px"></div><svg style="left:787px;top:204px" width="23" height="22" viewBox="0 0 23 22"><path d="M5 18V8L9 4H19V11H12V18Z" fill="#f2f2f2"/><rect x="14" y="12" width="5" height="2.5" fill="#f2f2f2"/><path d="M8.5 18V7.5H19" fill="none" stroke="#111" stroke-width="1" stroke-dasharray="1 1"/></svg><div class="a" style="left:814px;top:204px;width:23px;height:22px;background:#25467a;border:1px solid #3d5f94;border-radius:3px"></div><svg style="left:814px;top:204px" width="23" height="22" viewBox="0 0 23 22"><path d="M5 18V9A5 5 0 0 1 10 4H19V11H12V18Z" fill="#f2f2f2"/><rect x="14" y="12" width="5" height="2.5" fill="#f2f2f2"/><path d="M8.5 18V7.5H19" fill="none" stroke="#111" stroke-width="1" stroke-dasharray="1 1"/></svg><div class="a" style="left:841px;top:204px;width:23px;height:22px;background:#2b2b2b;border:1px solid #272727;border-radius:3px"></div><svg style="left:841px;top:204px" width="23" height="22" viewBox="0 0 23 22"><path d="M5 18V4H19V11H12V18Z" fill="#f2f2f2"/><rect x="14" y="12" width="5" height="2.5" fill="#f2f2f2"/><path d="M8.5 18V7.5H19" fill="none" stroke="#111" stroke-width="1" stroke-dasharray="1 1"/></svg><div class="ent" style="left:865px;top:204px;width:63px;height:22px;background:#2d2d2d;border-color:#2a2a2a"></div><div id="t42" class="t" style="left:872px;top:211px;font-size:11px;color:#6c6c6c;transform:scaleX(0.8403);transform-origin:0 0;">4.00</div><div class="a" style="left:907px;top:215px;width:8px;height:1.6px;background:#6a6a6a"></div><div class="a" style="left:918px;top:215px;width:9px;height:1.6px;background:#6a6a6a"></div><div class="a" style="left:921.7px;top:211.3px;width:1.6px;height:9px;background:#6a6a6a"></div><div id="t43" class="t" style="left:753px;top:238px;font-size:10.5px;color:#dcdcdc;transform:scaleX(1.0415);transform-origin:0 0;">端:</div><div class="a" style="left:787px;top:231px;width:23px;height:22px;background:#2b2b2b;border:1px solid #272727;border-radius:3px"></div><svg style="left:787px;top:231px" width="23" height="22" viewBox="0 0 23 22"><rect x="6" y="8" width="11" height="10" fill="#f2f2f2"/><rect x="11" y="8" width="1.5" height="10" fill="#555"/></svg><div class="a" style="left:814px;top:231px;width:23px;height:22px;background:#213a5f;border:1px solid #272727;border-radius:3px"></div><svg style="left:814px;top:231px" width="23" height="22" viewBox="0 0 23 22"><path d="M5.5 18V10A6 6 0 0 1 17.5 10V18Z" fill="#f2f2f2"/><rect x="11" y="9" width="1.5" height="9" fill="#667"/></svg><div class="a" style="left:841px;top:231px;width:23px;height:22px;background:#2b2b2b;border:1px solid #272727;border-radius:3px"></div><svg style="left:841px;top:231px" width="23" height="22" viewBox="0 0 23 22"><rect x="5" y="5" width="12" height="13" fill="#f2f2f2"/><rect x="8.5" y="8" width="1.3" height="10" fill="#444"/><rect x="12.2" y="8" width="1.3" height="10" fill="#444"/></svg><div id="t44" class="t" style="left:753px;top:264px;font-size:10.5px;color:#dcdcdc;transform:scaleX(0.9429);transform-origin:0 0;">順番:</div><div class="a" style="left:787px;top:257px;width:23px;height:22px;background:#223a62;border:1px solid #272727;border-radius:3px"></div><svg style="left:787px;top:257px" width="23" height="22" viewBox="0 0 23 22"><rect x="7.5" y="7.5" width="13" height="13" fill="#f2f2f2"/><rect x="12.5" y="12.5" width="8" height="8" fill="#e3099a"/><circle cx="9.4" cy="9.3" r="5.6" fill="#1ea9e8"/></svg><div class="a" style="left:814px;top:257px;width:23px;height:22px;background:#2b2b2b;border:1px solid #272727;border-radius:3px"></div><svg style="left:814px;top:257px" width="23" height="22" viewBox="0 0 23 22"><rect x="7.5" y="7.5" width="13" height="13" fill="#f2f2f2"/><rect x="11.5" y="11.5" width="9" height="9" fill="#e3099a"/><circle cx="9.4" cy="9.3" r="5.6" fill="#1ea9e8"/></svg><div class="a" style="left:841px;top:257px;width:23px;height:22px;background:#2b2b2b;border:1px solid #272727;border-radius:3px"></div><svg style="left:841px;top:257px" width="23" height="22" viewBox="0 0 23 22"><circle cx="9.4" cy="9.3" r="5.6" fill="#1ea9e8"/><rect x="12.5" y="12.5" width="8" height="8" fill="#e3099a"/><path d="M7.5 20.5V7.5H20.5V12.5H12.5V20.5Z" fill="#f2f2f2"/></svg><div class="a" style="left:787px;top:284px;width:23px;height:22px;background:#2b2b2b;border:1px solid #272727;border-radius:3px"></div><svg style="left:787px;top:284px" width="23" height="22" viewBox="0 0 23 22"><circle cx="9.4" cy="9.3" r="5.6" fill="#1ea9e8"/><rect x="12.5" y="12.5" width="8" height="8" fill="#e3099a"/><path d="M7.5 20.5V7.5H20.5V12.5H12.5V20.5Z" fill="#f2f2f2"/></svg><div class="a" style="left:814px;top:284px;width:23px;height:22px;background:#2b2b2b;border:1px solid #272727;border-radius:3px"></div><svg style="left:814px;top:284px" width="23" height="22" viewBox="0 0 23 22"><circle cx="9.4" cy="9.3" r="5.6" fill="#1ea9e8"/><rect x="7.5" y="7.5" width="13" height="13" fill="#f2f2f2"/><rect x="10.5" y="10.5" width="10" height="10" fill="#e3099a"/></svg><div class="a" style="left:841px;top:284px;width:23px;height:22px;background:#2b2b2b;border:1px solid #272727;border-radius:3px"></div><svg style="left:841px;top:284px" width="23" height="22" viewBox="0 0 23 22"><circle cx="9.4" cy="9.3" r="5.6" fill="#1ea9e8"/><path d="M7.5 20.5V7.5H20.5V12.5H12.5V20.5Z" fill="#f2f2f2"/><rect x="12.5" y="12.5" width="8" height="8" fill="#e3099a"/></svg><div id="t45" class="t" style="left:1105px;top:542px;font-size:10.5px;color:#dcdcdc;transform:scaleX(0.6556);transform-origin:0 0;">ブレンドモード:</div><div class="ent" style="left:1162px;top:535px;width:81px;height:23px"></div><div id="t46" class="t" style="left:1169px;top:542px;font-size:10.5px;color:#e0e0e0;transform:scaleX(0.9864);transform-origin:0 0;">標準</div><svg style="left:1227px;top:545px" width="9" height="6"><path d="M1 1L4.5 4.5L8 1" stroke="#e0e0e0" stroke-width="1.4" fill="none"/></svg><div class="a" style="left:749px;top:561px;width:440px;height:16px;background:#232323"></div><div class="a" style="left:749px;top:561px;width:1px;height:16px;background:#111"></div><div id="t47" class="t" style="left:752px;top:564px;font-size:10.5px;color:#e0e0e0;transform:scaleX(0.7560);transform-origin:0 0;">ぼかし (%)</div><div class="a" style="left:1189px;top:561px;width:54px;height:16px;background:#2a2a2a"></div><div id="t48" class="t" style="left:1196px;top:564px;font-size:11px;color:#e0e0e0;transform:scaleX(0.8172);transform-origin:0 0;">0.0</div><div class="a" style="left:1222px;top:568px;width:8px;height:1.6px;background:#6a6a6a"></div><div class="a" style="left:1233px;top:568px;width:9px;height:1.6px;background:#e8e8e8"></div><div class="a" style="left:1236.7px;top:564.3px;width:1.6px;height:9px;background:#e8e8e8"></div><div class="a" style="left:749px;top:582px;width:441px;height:16px;background:#2b5ba6"></div><div class="a" style="left:749px;top:582px;width:1px;height:16px;background:#111"></div><div id="t49" class="t" style="left:752px;top:585px;font-size:10.5px;color:#f0f0f0;transform:scaleX(0.9012);transform-origin:0 0;">不透明度 (%)</div><div class="a" style="left:1190px;top:582px;width:53px;height:16px;background:#2a2a2a"></div><div id="t50" class="t" style="left:1196px;top:585px;font-size:11px;color:#e0e0e0;transform:scaleX(0.8717);transform-origin:0 0;">100.0</div><div class="a" style="left:1220px;top:589px;width:8px;height:1.6px;background:#e8e8e8"></div><div class="a" style="left:1231px;top:589px;width:9px;height:1.6px;background:#6a6a6a"></div><div class="a" style="left:1234.7px;top:585.3px;width:1.6px;height:9px;background:#6a6a6a"></div><div class="a" style="left:1246px;top:66px;width:34px;height:585px;background:#343434"></div><div class="a" style="left:1243px;top:70px;width:3px;height:535px;background:#282828"></div><svg style="left:1257px;top:76px" width="13" height="13" viewBox="0 0 13 13"><path d="M2 1H8L11 4V12H2Z" fill="none" stroke="#eee" stroke-width="1.5"/><circle cx="10.5" cy="2" r="1.5" fill="#2aa04a"/></svg><svg style="left:1257px;top:99px" width="13" height="13" viewBox="0 0 13 13"><path d="M1 3H5L6 4H11V11H1Z" fill="#eee"/><path d="M1 6H12L11 11H1Z" fill="#ccc"/></svg><svg style="left:1257px;top:124px" width="13" height="13" viewBox="0 0 13 13"><rect x="1" y="9" width="11" height="3" fill="#eee"/><path d="M6.5 1V7M4 5L6.5 7.5L9 5" stroke="#2aa04a" stroke-width="1.8" fill="none"/></svg><svg style="left:1257px;top:149px" width="13" height="13" viewBox="0 0 13 13"><rect x="3" y="1" width="7" height="3" fill="#ddd"/><rect x="1" y="4" width="11" height="5" fill="#eee"/><rect x="3" y="8" width="7" height="4" fill="#ccc"/></svg><svg style="left:1257px;top:176px" width="13" height="13" viewBox="0 0 13 13"><path d="M2 1H8L11 4V12H2Z" fill="none" stroke="#eee" stroke-width="1.5"/><path d="M4 7A3 3 0 0 1 9 6" stroke="#2aa04a" stroke-width="1.4" fill="none"/></svg><svg style="left:1257px;top:201px" width="13" height="13" viewBox="0 0 13 13"><path d="M2 1H8L11 4V12H2Z" fill="none" stroke="#eee" stroke-width="1.5"/><path d="M6 8H12" stroke="#2aa04a" stroke-width="1.4"/></svg><svg style="left:1257px;top:227px" width="13" height="13" viewBox="0 0 13 13"><path d="M4 3L1.5 5.5L4 8M2 5.5H8A3 3 0 0 1 8 11.5H6" stroke="#e0e0e0" stroke-width="1.4" fill="none"/></svg><svg style="left:1257px;top:253px" width="13" height="13" viewBox="0 0 13 13"><path d="M9 3L11.5 5.5L9 8M11 5.5H5A3 3 0 0 0 5 11.5H7" stroke="#777" stroke-width="1.4" fill="none"/></svg><svg style="left:1257px;top:280px" width="13" height="13" viewBox="0 0 13 13"><rect x="1" y="1" width="7" height="7" fill="#bbb"/><rect x="5" y="5" width="7" height="7" fill="#f0f0f0"/></svg><svg style="left:1257px;top:305px" width="13" height="13" viewBox="0 0 13 13"><circle cx="3.5" cy="10" r="2.2" fill="none" stroke="#eee" stroke-width="1.3"/><circle cx="9.5" cy="10" r="2.2" fill="none" stroke="#eee" stroke-width="1.3"/><path d="M4.5 8L9 1M8.5 8L4 1" stroke="#eee" stroke-width="1.3"/></svg><svg style="left:1257px;top:330px" width="13" height="13" viewBox="0 0 13 13"><rect x="2" y="2" width="9" height="10" fill="#ccc"/><rect x="4" y="1" width="5" height="3" fill="#eee"/><rect x="3" y="4" width="7" height="7" fill="#eee"/></svg><svg style="left:1257px;top:357px" width="13" height="13" viewBox="0 0 13 13"><circle cx="6" cy="6" r="4.5" fill="#eee"/><path d="M9 9L12 12" stroke="#eee" stroke-width="2"/><rect x="3" y="3" width="5" height="5" fill="#888"/></svg><svg style="left:1257px;top:382px" width="13" height="13" viewBox="0 0 13 13"><circle cx="6" cy="6" r="4.5" fill="#eee"/><path d="M9 9L12 12" stroke="#eee" stroke-width="2"/><path d="M4 4L8 8M8 4L4 8" stroke="#555" stroke-width="1.2"/></svg><svg style="left:1257px;top:406px" width="13" height="13" viewBox="0 0 13 13"><circle cx="6" cy="6" r="4.5" fill="#eee"/><path d="M9 9L12 12" stroke="#eee" stroke-width="2"/><rect x="4" y="3" width="1.5" height="6" fill="#555"/><rect x="6.5" y="3" width="1.5" height="6" fill="#555"/></svg><svg style="left:1257px;top:431px" width="13" height="13" viewBox="0 0 13 13"><rect x="1" y="1" width="11" height="11" fill="none" stroke="#eee" stroke-width="1.3"/><rect x="4" y="4" width="5" height="5" fill="#eee"/></svg><svg style="left:1257px;top:458px" width="13" height="13" viewBox="0 0 13 13"><rect x="1" y="1" width="7" height="7" fill="#eee"/><rect x="5" y="5" width="7" height="7" fill="#2aa04a"/></svg><svg style="left:1257px;top:483px" width="13" height="13" viewBox="0 0 13 13"><rect x="1" y="1" width="7" height="7" fill="#eee"/><rect x="5" y="5" width="7" height="7" fill="#2e2e2e" stroke="#eee" stroke-width="1.3"/></svg><svg style="left:1257px;top:507px" width="13" height="13" viewBox="0 0 13 13"><rect x="5" y="5" width="7" height="7" fill="#eee"/><rect x="1" y="1" width="7" height="7" fill="#2e2e2e" stroke="#eee" stroke-width="1.3"/></svg><svg style="left:1257px;top:534px" width="13" height="13" viewBox="0 0 13 13"><circle cx="6.5" cy="6.5" r="2.5" fill="#eee"/><path d="M1 1H3M1 1V3M12 1H10M12 1V3M1 12H3M1 12V10M12 12H10M12 12V10" stroke="#ddd" stroke-width="1.2"/></svg><svg style="left:1257px;top:559px" width="13" height="13" viewBox="0 0 13 13"><circle cx="6.5" cy="6.5" r="2.5" fill="#eee"/><path d="M1 1L4 4M12 1L9 4M1 12L4 9M12 12L9 9" stroke="#ddd" stroke-width="1.5"/></svg><div class="ent" style="left:1254px;top:580px;width:22px;height:21px"></div><svg style="left:1260px;top:588px" width="10" height="6"><path d="M1 1L5 5L9 1" stroke="#e0e0e0" stroke-width="1.4" fill="none"/></svg><svg style="left:1253px;top:616px" width="10" height="6"><path d="M1 5L5 1L9 5" stroke="#777" stroke-width="1.3" fill="none"/></svg><svg style="left:1253px;top:637px" width="10" height="6"><path d="M1 1L5 5L9 1" stroke="#777" stroke-width="1.3" fill="none"/></svg><svg style="left:1269px;top:637px" width="10" height="9"><path d="M0 1H10M0 4.5H10M0 8H10" stroke="#e8e8e8" stroke-width="1.6"/></svg><div class="a" style="left:0;top:605px;width:1246px;height:46px;background:#323232"></div><div class="a" style="left:0;top:607px;width:44px;height:44px;background:#fff"></div><svg style="left:0;top:607px" width="44" height="44"><path d="M4.5 4L39.5 40M39.5 4L4.5 40" stroke="#bb1040" stroke-width="3.3" stroke-linecap="round"/></svg><div class="a" style="left:44px;top:607px;width:44px;height:44px;background:#000"></div><div class="a" style="left:88px;top:607px;width:1px;height:44px;background:#222"></div><div class="a" style="left:89px;top:607px;width:43px;height:44px;background:#000"></div><div class="a" style="left:132px;top:629px;width:22px;height:22px;background:#1f6ff5"></div><div class="a" style="left:154px;top:629px;width:22px;height:22px;background:#20aeb8"></div><div class="a" style="left:176px;top:629px;width:22px;height:22px;background:#1e0b5c"></div><div class="a" style="left:198px;top:629px;width:22px;height:22px;background:#d9644f"></div><div class="a" style="left:220px;top:629px;width:22px;height:22px;background:#d42148"></div><div class="a" style="left:242px;top:629px;width:22px;height:22px;background:#eaf4fb"></div><svg style="left:176px;top:629px" width="22" height="22"><circle cx="11" cy="11" r="7" fill="none" stroke="#c8a0f0" stroke-width="1.6"/></svg><svg style="left:198px;top:629px" width="22" height="22"><circle cx="11" cy="11" r="4" fill="#f4c8b8"/></svg><div class="a" style="left:0;top:651px;width:1280px;height:28px;background:#333333"></div><div id="t51" class="t" style="left:15px;top:655px;font-size:10.5px;color:#dcdcdc;transform:scaleX(0.6264);transform-origin:0 0;">フィル:</div><div id="t52" class="t" style="left:-1px;top:669px;font-size:10.5px;color:#dcdcdc;transform:scaleX(0.6647);transform-origin:0 0;">ストローク:</div><div class="a" style="left:50px;top:652px;width:34px;height:13px;background:#d9644f"></div><div class="a" style="left:50px;top:666px;width:34px;height:13px;background:#1e0b5c"></div><div id="t53" class="t" style="left:92px;top:669px;font-size:10.5px;color:#dcdcdc;transform:scaleX(0.8807);transform-origin:0 0;">1.00</div><div id="t54" class="t" style="left:117px;top:661px;font-size:11px;color:#dcdcdc;transform:scaleX(0.7742);transform-origin:0 0;">O:</div><div class="a" style="left:129px;top:652px;width:49px;height:28px;background:#2a2a2a;border-right:1px solid #242424;border-left:1px solid #242424"></div><div id="t55" class="t" style="left:135px;top:661px;font-size:11px;color:#e6e6e6;transform:scaleX(0.8170);transform-origin:0 0;">100</div><div class="a" style="left:156px;top:666px;width:8px;height:1.6px;background:#e8e8e8"></div><div class="a" style="left:167px;top:666px;width:9px;height:1.6px;background:#6a6a6a"></div><div class="a" style="left:170.7px;top:662.3px;width:1.6px;height:9px;background:#6a6a6a"></div><div class="a" style="left:185px;top:657px;width:2px;height:16px;background:#4a7fd0;border-radius:1px"></div><div id="t56" class="t" style="left:191px;top:661px;font-size:11px;color:#dcdcdc;transform:scaleX(0.8446);transform-origin:0 0;">Layer 1</div><svg style="left:235px;top:660px" width="12" height="9"><path d="M1 4.5C3 1 9 1 11 4.5C9 8 3 8 1 4.5Z" fill="none" stroke="#e6e6e6" stroke-width="1.5"/><circle cx="6" cy="4.5" r="1.5" fill="#e6e6e6"/><path d="M2 0.5L3 2M10 0.5L9 2" stroke="#e6e6e6" stroke-width="1.2"/></svg><svg style="left:261px;top:660px" width="10" height="11"><path d="M6 4V2.5a2 2 0 0 1 4 0" stroke="#eee" stroke-width="1.3" fill="none"/><rect x="1" y="4.5" width="6.5" height="5.5" fill="#f0f0f0"/></svg><div id="t57" class="t" style="left:283px;top:661px;font-size:10.5px;color:#e0e0e0;transform:scaleX(0.7524);transform-origin:0 0;">パス 3 ノード 所属: レイヤー <b>Layer 1</b>. 選択オブジェクトのクリックで拡大縮小ハンドル/回転ハンドルが切り替わります.</div><div id="t58" class="t" style="left:1064px;top:655px;font-size:11px;color:#d0d0d0;transform:scaleX(0.7688);transform-origin:0 0;">X:</div><div id="t59" class="t" style="left:1082px;top:655px;font-size:11px;color:#d8d8d8;transform:scaleX(0.8527);transform-origin:0 0;">215.68</div><div id="t60" class="t" style="left:1064px;top:669px;font-size:11px;color:#d0d0d0;transform:scaleX(0.8166);transform-origin:0 0;">Y:</div><div id="t61" class="t" style="left:1082px;top:669px;font-size:11px;color:#d8d8d8;transform:scaleX(0.8743);transform-origin:0 0;">117.90</div><div id="t62" class="t" style="left:1119px;top:661px;font-size:11px;color:#d8d8d8;transform:scaleX(0.7157);transform-origin:0 0;">Z:</div><div class="a" style="left:1130px;top:652px;width:59px;height:28px;background:#2a2a2a"></div><div id="t63" class="t" style="left:1140px;top:661px;font-size:11px;color:#e0e0e0;transform:scaleX(0.8624);transform-origin:0 0;">93%</div><div class="a" style="left:1163px;top:666px;width:8px;height:1.6px;background:#e8e8e8"></div><div class="a" style="left:1174px;top:666px;width:9px;height:1.6px;background:#e8e8e8"></div><div class="a" style="left:1177.7px;top:662.3px;width:1.6px;height:9px;background:#e8e8e8"></div><div id="t64" class="t" style="left:1197px;top:661px;font-size:11px;color:#d8d8d8;transform:scaleX(0.6818);transform-origin:0 0;">R:</div><div class="a" style="left:1208px;top:652px;width:65px;height:28px;background:#2a2a2a"></div><div id="t65" class="t" style="left:1220px;top:661px;font-size:11px;color:#e0e0e0;transform:scaleX(0.8833);transform-origin:0 0;">0.00°</div><div class="a" style="left:1249px;top:666px;width:8px;height:1.6px;background:#e8e8e8"></div><div class="a" style="left:1260px;top:666px;width:9px;height:1.6px;background:#e8e8e8"></div><div class="a" style="left:1263.7px;top:662.3px;width:1.6px;height:9px;background:#e8e8e8"></div><div class="a" style="left:0;top:680px;width:1280px;height:2px;background:#dde0bf"></div><svg style="left:0;top:0" width="1280" height="720"><text y="283" font-size="34" font-weight="bold" text-anchor="middle" font-family="Liberation Sans, sans-serif" fill="#0b0b0b" stroke="#0b0b0b" stroke-width="9" stroke-linejoin="round"><tspan x="51.5">角</tspan><tspan x="86">が</tspan><tspan x="122.7">丸</tspan><tspan x="151.7">く</tspan><tspan x="183">な</tspan><tspan x="216.5">っ</tspan><tspan x="248">た</tspan></text><text y="283" font-size="34" font-weight="bold" text-anchor="middle" font-family="Liberation Sans, sans-serif" fill="#f8dd84" stroke="#f8dd84" stroke-width="1.6" stroke-linejoin="round"><tspan x="51.5">角</tspan><tspan x="86">が</tspan><tspan x="122.7">丸</tspan><tspan x="151.7">く</tspan><tspan x="183">な</tspan><tspan x="216.5">っ</tspan><tspan x="248">た</tspan></text><text y="238.5" font-size="34" font-weight="bold" text-anchor="middle" font-family="Liberation Sans, sans-serif" fill="#0b0b0b" stroke="#0b0b0b" stroke-width="9" stroke-linejoin="round"><tspan x="964.5">角</tspan><tspan x="989.7">：</tspan><tspan x="1017.3">丸</tspan><tspan x="1052.5">結</tspan><tspan x="1087">合</tspan></text><text y="238.5" font-size="34" font-weight="bold" text-anchor="middle" font-family="Liberation Sans, sans-serif" fill="#f8dd84" stroke="#f8dd84" stroke-width="1.6" stroke-linejoin="round"><tspan x="964.5">角</tspan><tspan x="989.7">：</tspan><tspan x="1017.3">丸</tspan><tspan x="1052.5">結</tspan><tspan x="1087">合</tspan></text></svg><svg style="left:0;top:0" width="1280" height="720" font-family="Liberation Sans, sans-serif"><text x="988.7" y="438" font-size="14.5" fill="#f4f4f4" text-anchor="middle" transform="rotate(-8 988.7 438)" font-weight="normal" stroke="#f4f4f4" stroke-width="0.2">初</text><text x="1008.5" y="433" font-size="14.5" fill="#f4f4f4" text-anchor="middle" transform="rotate(-6 1008.5 433)" font-weight="normal" stroke="#f4f4f4" stroke-width="0.2">期</text><text x="1027" y="428" font-size="14.5" fill="#f4f4f4" text-anchor="middle" transform="rotate(-4 1027 428)" font-weight="normal" stroke="#f4f4f4" stroke-width="0.2">費</text><text x="1046" y="424.5" font-size="14.5" fill="#f4f4f4" text-anchor="middle" transform="rotate(-4 1046 424.5)" font-weight="normal" stroke="#f4f4f4" stroke-width="0.2">用</text><path d="M977.3 442C984 446 991 447 998 444C1004 441 1008 436 1012 434.5C1016 433 1020 435 1019.5 438C1019 441 1016 441 1016 438C1016 435 1022 434 1030 433.5C1040 433 1050 430 1058 426C1064 422 1067 416 1068.5 410" fill="none" stroke="#e6e6e6" stroke-width="1.1"/><text x="1018" y="463.5" font-size="25" font-weight="bold" fill="#ffffff" textLength="55" lengthAdjust="spacingAndGlyphs">ゼロ</text><text x="1082" y="464.5" font-size="16" fill="#f2f2f2" textLength="34" lengthAdjust="spacing">から</text><text x="1031" y="485.5" font-size="18" fill="#f2f2f2" textLength="74" lengthAdjust="spacing">はじめて</text><text x="1107" y="486" font-size="20" font-weight="bold" fill="#ffffff" textLength="116" lengthAdjust="spacingAndGlyphs">クリエイター</text><text x="1043.5" y="506.5" font-size="11.5" fill="#e8e8e8" textLength="132" lengthAdjust="spacingAndGlyphs">zero kara hajimete creator</text></svg></body></html>
